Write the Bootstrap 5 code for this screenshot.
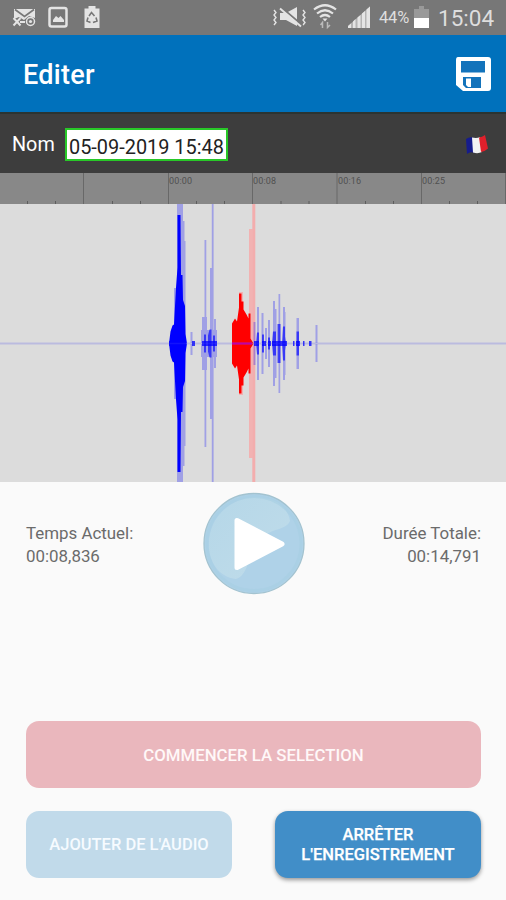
<!DOCTYPE html>
<html lang="fr">
<head>
<meta charset="utf-8">
<meta name="viewport" content="width=device-width, initial-scale=1">
<title>Editer</title>
<link href="https://cdn.jsdelivr.net/npm/bootstrap@5.3.0/dist/css/bootstrap.min.css" rel="stylesheet">
<style>
body{font-family:Roboto,"Liberation Sans",sans-serif;background:#fafafa;height:900px;overflow:hidden}
svg{display:block}
.status{height:35px;background:#777;color:#dedede;padding-right:10px}
.status svg{flex:none}
.pct{font-size:16.500px;line-height:36px;letter-spacing:-.2px;margin-left:8px;width:35px;white-space:nowrap}
.clock{font-size:22.500px;line-height:36px;margin-left:9px;width:58px;white-space:nowrap}
.appbar{height:77px;background:#0071bc;padding:0 15px 0 23px}
.appbar h1{font-size:27px;font-weight:500;line-height:32px;letter-spacing:.3px;padding-top:2px}
.namebar{height:61px;background:#3d3d3d;border-top:2px solid #2b3432;padding:2px 17px 0 12px}
.namebar label{font-size:19.800px;width:53px;line-height:28px}
.namebar input{width:163px;height:33px;border:2px solid #28c828;border-radius:0;padding:5px 0 0 2px;font-size:19.900px;color:#222;background:#fff}
.ruler{height:31px}
.times{height:123px;padding:9px 25px 0 26px;color:#6b6b6b;font-size:16.900px;line-height:23px}
.times .side{width:140px;margin-top:31px}
.actions{padding:0 25px 0 26px;margin-top:116px}
.actions .btn{height:67px;border:0;border-radius:13px;color:#fff;font-weight:500;font-size:16.800px;line-height:20px;padding:0;opacity:1}
.actions .second{margin-top:23px}
.actions .second .btn{font-size:16.500px;padding-top:1px}
.b-red{background:#eab7bd!important;color:#fff8f8!important}
.b-pale{background:#c1daea!important;width:206px;color:#f6fbff!important}
.b-blue{background:#418ec8!important;width:206px;box-shadow:0 2px 4px rgba(0,0,0,.4);-webkit-text-stroke:.25px #fff}
</style>
<script src="https://cdn.jsdelivr.net/npm/bootstrap@5.3.0/dist/js/bootstrap.bundle.min.js"></script>
</head>
<body>
<div class="status d-flex align-items-center justify-content-between">
  <svg width="110" height="35" viewBox="0 0 110 35" fill="#e4e4e4">
    <path d="M14 9h21v9l-6-2-5 4-5-3-5 2z"/>
    <path d="M15 9.500l9.500 7 9.500-7" fill="none" stroke="#777" stroke-width="1.700"/>
    <path d="M13.500 18l7 7.500M20.500 18l-7 7.500M20 22h5" fill="none" stroke="#e4e4e4" stroke-width="2"/>
    <circle cx="30.500" cy="21.500" r="4" fill="none" stroke="#e4e4e4" stroke-width="1.500"/>
    <circle cx="30.500" cy="21.500" r="1.600"/>
    <rect x="49.500" y="8" width="17" height="18.500" rx="2" fill="none" stroke="#e4e4e4" stroke-width="2.500"/>
    <path d="M53 22v-2l3-4 2.500 2 2-2 3.500 4v2z"/>
    <path d="M84.500 8.500h4V6h7v2.500h4V28h-15z"/>
    <path d="M89 16l2.500-3.500 3 3.500M96 17.500l1 3.500-4 1.500M90.500 22.500l-3.500-1.500 1-3.500" fill="none" stroke="#777" stroke-width="1.600"/>
  </svg>
  <div class="d-flex align-items-center">
    <svg width="99" height="35" viewBox="273 0 99 35" fill="#e4e4e4">
      <path d="M275 10l2 2.500-2 2.500 2 2.500-2 2.500 2 2.500-2 2.500M304 10l2 2.500-2 2.500 2 2.500-2 2.500 2 2.500-2 2.500" fill="none" stroke="#e4e4e4" stroke-width="1.400"/>
      <path d="M281 13h6l11-6v19l-11-6h-6z"/>
      <path d="M283 8l20 17" stroke="#777" stroke-width="2"/>
      <path d="M281 8.500l21 18" stroke="#e4e4e4" stroke-width="2"/>
      <g fill="none" stroke="#e4e4e4" stroke-width="2.200"><path d="M315 9.500q11-8.500 22 0M318 13.500q8-6.500 16 0M321 17q5-4 10 0"/></g>
      <path d="M323.500 18.500h5L326 21.500z"/>
      <path d="M323.500 28v-5.500l-2 2.500M328.500 22v5.500l2.500-2.500" stroke="#bbb" stroke-width="1.500" fill="none"/>
      <path d="M349 28v-2l22-19.500V28z" fill="#b4b4b4"/>
      <path d="M349 28v-2l3-2.500V28zM354 28v-6.500l2.500-2.500v9zM358.500 28V17.500l3-2.500v13zM363 28V13.500l3-2.500v17zM367.500 28V9.500l3.500-3V28z"/>
    </svg>
    <span class="pct">44%</span>
    <svg width="15" height="35" viewBox="0 0 15 35"><path d="M0 9h5V6h5v3h5v10H0z" fill="#999"/><path d="M0 18h15v10H0z" fill="#fff"/></svg>
    <span class="clock">15:04</span>
  </div>
</div>

<header class="appbar d-flex align-items-center justify-content-between">
  <h1 class="m-0 text-white">Editer</h1>
  <svg width="36" height="36" viewBox="0 0 36 36">
    <path d="M3 1h30q3 0 3 3v28q0 3-3 3H8l-7-6V4q0-3 2-3z" fill="#fff"/>
    <path d="M6 5h24v11.500H6zM8 21h18v11H11l-3-3z" fill="#1373bb"/>
    <path d="M11 22.500h5v8.500h-3l-2-2z" fill="#fff"/>
  </svg>
</header>

<div class="namebar d-flex align-items-center">
  <label for="nom" class="text-white">Nom</label>
  <input id="nom" class="form-control flex-grow-0" value="05-09-2019 15:48">
  <svg class="ms-auto" width="24" height="20" viewBox="0 0 24 20">
    <path d="M1 4q4-3 8-1l1 15q-5-2-8 1z" fill="#161c8c"/>
    <path d="M7 2.500q5 1 8-.5l2 15q-4 2-9 .5z" fill="#f3f3f3"/>
    <path d="M14 2.500q3-.5 6-2.500l3 13.500q-3 3-7 3.500z" fill="#e0202b"/>
  </svg>
</div>

<svg class="ruler" width="506" height="31" viewBox="0 173 506 31">
  <path d="M0 173h506v31H0z" fill="#888"/>
  <path d="M83.500 173v31M168.500 173v31M252.500 173v31M337 173v31M421.500 173v31M505.500 173v31" stroke="#686868"/>
  <path d="M27.500 201v3M55.500 201v3M112.500 201v3M140.500 201v3M196.500 201v3M224.500 201v3M281 201v3M309 201v3M365.500 201v3M393.500 201v3M449.500 201v3M477.500 201v3" stroke="#5d5d5d"/>
  <g font-size="9" fill="#505050"><text x="169" y="184" textLength="23">00:00</text><text x="253" y="184" textLength="23">00:08</text><text x="338" y="184" textLength="23">00:16</text><text x="422" y="184" textLength="23">00:25</text></g>
</svg>

<svg width="506" height="278" viewBox="0 204 506 278">
  <defs>
    <g id="half">
      <g fill="#00f" fill-opacity=".27">
        <path d="M177 204h6v139h-6zM182 221h2.500v122H182zM184 241h1.500v102H184zM174 288h4v55h-4z"/>
        <path d="M204.500 240h1.800v103h-1.800zM210 268h2v75h-2zM211.800 204h1.800v139h-1.800zM202 317h5v26h-5zM214 319h2v24h-2zM190.500 332h2v11h-2zM201 330h16v13h-16z"/>
        <path d="M253.500 322h2v21h-2zM257 307h2v36h-2zM261.500 313h2v30h-2zM268 320h2v23h-2zM273 301h2v42h-2zM275 309h1.500v34H275zM278.500 294h1.700v49h-1.700zM283 307h2v36h-2zM284.500 312h1v31h-1zM296.500 318h2.500v25h-2.500zM315.500 325h2v18h-2zM265 328h2v15h-2z"/>
      </g>
      <g fill="#00f">
        <path d="M169 343.500l1.500-12 2-6 1.500-1 2-37 1.500-20V215h3l.5 60h1.500l.5 25 2 6 .5 28 1.500 9.500z"/>
        <path d="M256 343.500l1-11h2v11zM262 343.500v-9h2v9zM268 343.500v-6h2v6zM272 343.500l1-12h3v12zM277.500 343.500V324h3v19.500zM282 343.500l1-17h2v10l1 7zM204 343.500v-9h2v9zM208 343.500v-8l1.500-6h2v14zM213 343.500v-8h2v8zM296.500 343.500v-12h2.500v12z" fill-opacity=".65"/>
      </g>
      <path d="M249 229h3.500v114H249zM239 292h4v51h-4z" fill="#fba0a0" fill-opacity=".7"/>
      <path d="M232 343.500v-20l3-5 2 3 2-14v-14h2.500v8h2v8l3 5 2 4v-5h2v25l3 5z" fill="red"/>
    </g>
  </defs>
  <path d="M0 204h506v278H0z" fill="#dcdcdc"/>
  <path d="M252.300 204h3v278h-3z" fill="#f3adad"/>
  <use href="#half"/>
  <use href="#half" transform="matrix(1 0 0 -1 0 687)"/>
  <path d="M0 343.500h506" stroke="#7070e8" stroke-opacity=".3" stroke-width="2"/>
  <path d="M169 343.500h17M192 343.500h3M202 343.500h15M254 343.500h5M262 343.500h4M268 343.500h3M272 343.500h15M293 343.500h1.500M296 343.500h4M303 343.500h1.500M309 343.500h2.500" stroke="#00f" stroke-opacity=".75" stroke-width="5"/>
  <path d="M232 343.500h20" stroke="#c000a8" stroke-width="2"/>
</svg>

<section class="times d-flex justify-content-between">
  <div class="side">Temps Actuel:<br>00:08,836</div>
  <svg width="104" height="104" viewBox="0 0 104 104">
    <defs><linearGradient id="gloss" x1="0" y1="0" x2="1" y2="1"><stop offset="0" stop-color="#b5d7e8"/><stop offset="1" stop-color="#c0dcea"/></linearGradient></defs>
    <circle cx="52" cy="52.500" r="50" fill="#afd2e8" stroke="#a3c3d0" stroke-width="1.300"/>
    <path d="M34 88C14 86 3 65 8 43 15 13 46-1 73 10 81 14 87 22 88 30 84 39 72 37 62 45 46 57 48 84 34 88z" fill="url(#gloss)"/>
    <circle cx="52" cy="52.500" r="47" fill="none" stroke="#a7cee3" stroke-width="3" opacity=".6"/>
    <path d="M35 29.500v47L80 53z" fill="#fff" stroke="#fff" stroke-width="5" stroke-linejoin="round"/>
  </svg>
  <div class="side text-end">Durée Totale:<br>00:14,791</div>
</section>

<div class="actions d-grid">
  <button class="btn b-red">COMMENCER LA SELECTION</button>
  <div class="second d-flex justify-content-between">
    <button class="btn b-pale">AJOUTER DE L'AUDIO</button>
    <button class="btn b-blue">ARRÊTER<br>L'ENREGISTREMENT</button>
  </div>
</div>
</body>
</html>
